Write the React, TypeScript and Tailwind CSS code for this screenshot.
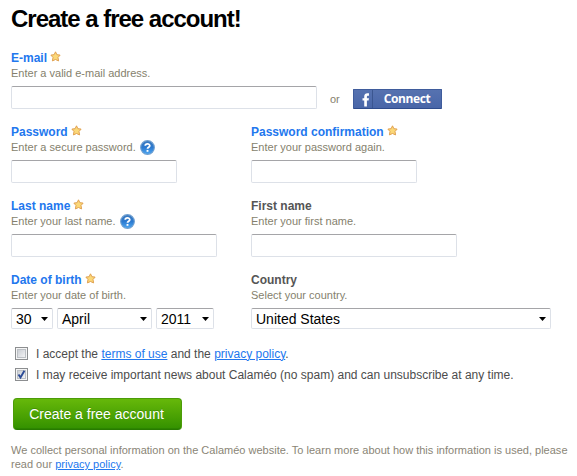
import type { ReactNode } from "react";

function Star() {
  return (
    <svg className="mb-[3px] h-[11px] w-[11px] shrink-0" viewBox="0 0 11 11">
      <path
        d="M5.5 .8 6.9 3.7 10.1 4.1 8 6.5 8.6 9.9 5.5 8.5 2.4 9.9 3 6.5 .9 4.1 4.1 3.7Z"
        fill="#fbd878"
        stroke="#e0a050"
        strokeWidth="1"
        strokeLinejoin="round"
      />
    </svg>
  );
}

function Help() {
  return (
    <svg className="h-[15px] w-[15px] shrink-0" viewBox="0 0 16 16">
      <defs>
        <linearGradient id="help" x1="0" y1="0" x2="0" y2="1">
          <stop offset="0" stopColor="#3a78bd" />
          <stop offset="0.5" stopColor="#2c7ad0" />
          <stop offset="1" stopColor="#4fa8f2" />
        </linearGradient>
      </defs>
      <circle cx="8" cy="8" r="7.3" fill="url(#help)" stroke="#6f9fd0" strokeWidth="1.2" />
      <path d="M5.6 6.1C5.7 3.6 10.4 3.5 10.4 6.1 10.4 7.7 8 7.7 8 9.4" fill="none" stroke="#fff" strokeWidth="1.9" />
      <rect x="7" y="10.6" width="2" height="2" fill="#fff" />
    </svg>
  );
}

function Field({
  label,
  hint,
  required,
  help,
  children,
}: {
  label: string;
  hint: string;
  required?: boolean;
  help?: boolean;
  children: ReactNode;
}) {
  return (
    <div className="h-[74px] whitespace-nowrap">
      <div className="flex h-4 items-center gap-[3px]">
        <span className={`text-[12px] leading-4 font-bold ${required ? "text-[#2277ee]" : "text-[#555555]"}`}>{label}</span>
        {required && <Star />}
      </div>
      <div className="flex h-[14px] items-center gap-[4px] text-[11px] leading-[14px] text-[#857f6d]">
        <span>{hint}</span>
        {help && <Help />}
      </div>
      <div className="mt-[6px] flex">{children}</div>
    </div>
  );
}

const boxClass = "rounded-[2px] border border-[#dde1e8] border-t-[#a5a5a8] bg-white";

function Select({ value, className }: { value: string; className: string }) {
  return (
    <div className={`flex h-[21px] items-center justify-between pr-[4px] pl-[4px] text-[14px] leading-[20px] text-black ${boxClass} ${className}`}>
      <span>{value}</span>
      <svg className="h-[4px] w-[7px]" viewBox="0 0 7 4">
        <path d="M0 0H7L3.5 4Z" fill="#000" />
      </svg>
    </div>
  );
}

function Checkbox({ checked }: { checked?: boolean }) {
  return (
    <svg className="h-[13px] w-[13px] shrink-0" viewBox="0 0 13 13">
      <defs>
        <linearGradient id="well" x1="0" y1="0" x2="1" y2="1">
          <stop offset="0" stopColor="#c8ccd2" />
          <stop offset="1" stopColor="#f5f5f6" />
        </linearGradient>
      </defs>
      <rect x=".5" y=".5" width="12" height="12" fill="#f5f5f5" stroke="#8c8e90" />
      <rect x="2.5" y="2.5" width="8" height="8" fill="url(#well)" stroke="#bcc0c5" />
      {checked && <path d="M3.5 6.5 5.5 9.4 9.4 2.8" fill="none" stroke="#2c4b96" strokeWidth="1.9" />}
    </svg>
  );
}

function Link({ children }: { children: ReactNode }) {
  return <a className="text-[#2277ee] underline underline-offset-[1px]">{children}</a>;
}

export default function App() {
  return (
    <main className="h-[476px] w-[577px] overflow-hidden bg-white pl-[11px] font-['Liberation_Sans',Arial,sans-serif]">
      <h1 className="h-[50px] pt-[5px] text-[24px] leading-[28px] font-bold tracking-[-1.02px] whitespace-nowrap text-black">
        Create a free account!
      </h1>
      <Field label="E-mail" hint="Enter a valid e-mail address." required>
        <div className={`h-[23px] w-[306px] ${boxClass}`} />
        <span className="ml-[13px] w-[23px] pt-[5px] text-[11px] leading-[16px] text-[#857f6d]">or</span>
        <button className="mt-[3px] flex h-[20px] w-[89px] overflow-hidden rounded-[1px] border border-[#3f5c9c] border-b-[#2f4c8c] bg-linear-to-b from-[#5672b0] to-[#4966a8]">
          <svg className="h-[18px] w-[19px] border-r border-[#3b5690]" viewBox="0 0 19 18">
            <path d="M10.8 17V10.7H9V8.1H10.8V6.2C10.8 3.9 12.2 3 14.1 3H15.8V5.5H14.8C13.9 5.5 13.6 5.9 13.6 6.8V8.1H15.8L15.4 10.7H13.6V17Z" fill="#fff" />
          </svg>
          <span className="flex-1 text-center font-['Open_Sans','Noto_Sans',sans-serif] text-[12px] leading-[18px] font-bold tracking-[-0.4px] text-white">
            Connect
          </span>
        </button>
      </Field>
      <div className="grid grid-cols-[240px_300px]">
        <Field label="Password" hint="Enter a secure password." required help>
          <div className={`h-[23px] w-[166px] ${boxClass}`} />
        </Field>
        <Field label="Password confirmation" hint="Enter your password again." required>
          <div className={`h-[23px] w-[166px] ${boxClass}`} />
        </Field>
        <Field label="Last name" hint="Enter your last name." required help>
          <div className={`h-[23px] w-[206px] ${boxClass}`} />
        </Field>
        <Field label="First name" hint="Enter your first name.">
          <div className={`h-[23px] w-[206px] ${boxClass}`} />
        </Field>
        <Field label="Date of birth" hint="Enter your date of birth." required>
          <div className="flex gap-[4px]">
            <Select value="30" className="w-[42px]" />
            <Select value="April" className="w-[95px]" />
            <Select value="2011" className="w-[58px]" />
          </div>
        </Field>
        <Field label="Country" hint="Select your country.">
          <Select value="United States" className="w-[300px]" />
        </Field>
      </div>
      <div className="-mt-[3px] flex h-[21px] items-center gap-[8px] pl-[4px] text-[12px] leading-[20px] whitespace-nowrap text-[#4c4c4c]">
        <Checkbox />
        <span>
          I accept the <Link>terms of use</Link> and the <Link>privacy policy</Link>.
        </span>
      </div>
      <div className="flex h-[21px] items-center gap-[8px] pl-[4px] text-[12px] leading-[20px] whitespace-nowrap text-[#4c4c4c]">
        <Checkbox checked />
        <span>I may receive important news about Calaméo (no spam) and can unsubscribe at any time.</span>
      </div>
      <button className="mt-[13px] ml-[2px] block h-[32px] w-[169px] rounded-[4px] border border-[#4c9c08] border-b-[#277b00] bg-linear-to-b from-[#66b80a] to-[#339100] pr-[2px] text-[14px] leading-[29px] text-white shadow-[inset_0_-1px_0_#2d8500] [text-shadow:0_-1px_0_#33800099]">
        Create a free account
      </button>
      <p className="mt-[13px] text-[11px] leading-[14px] tracking-[0.01px] whitespace-nowrap text-[#8a8576]">
        We collect personal information on the Calaméo website. To learn more about how this information is used, please
        <br />
        read our <Link>privacy policy</Link>.
      </p>
    </main>
  );
}
